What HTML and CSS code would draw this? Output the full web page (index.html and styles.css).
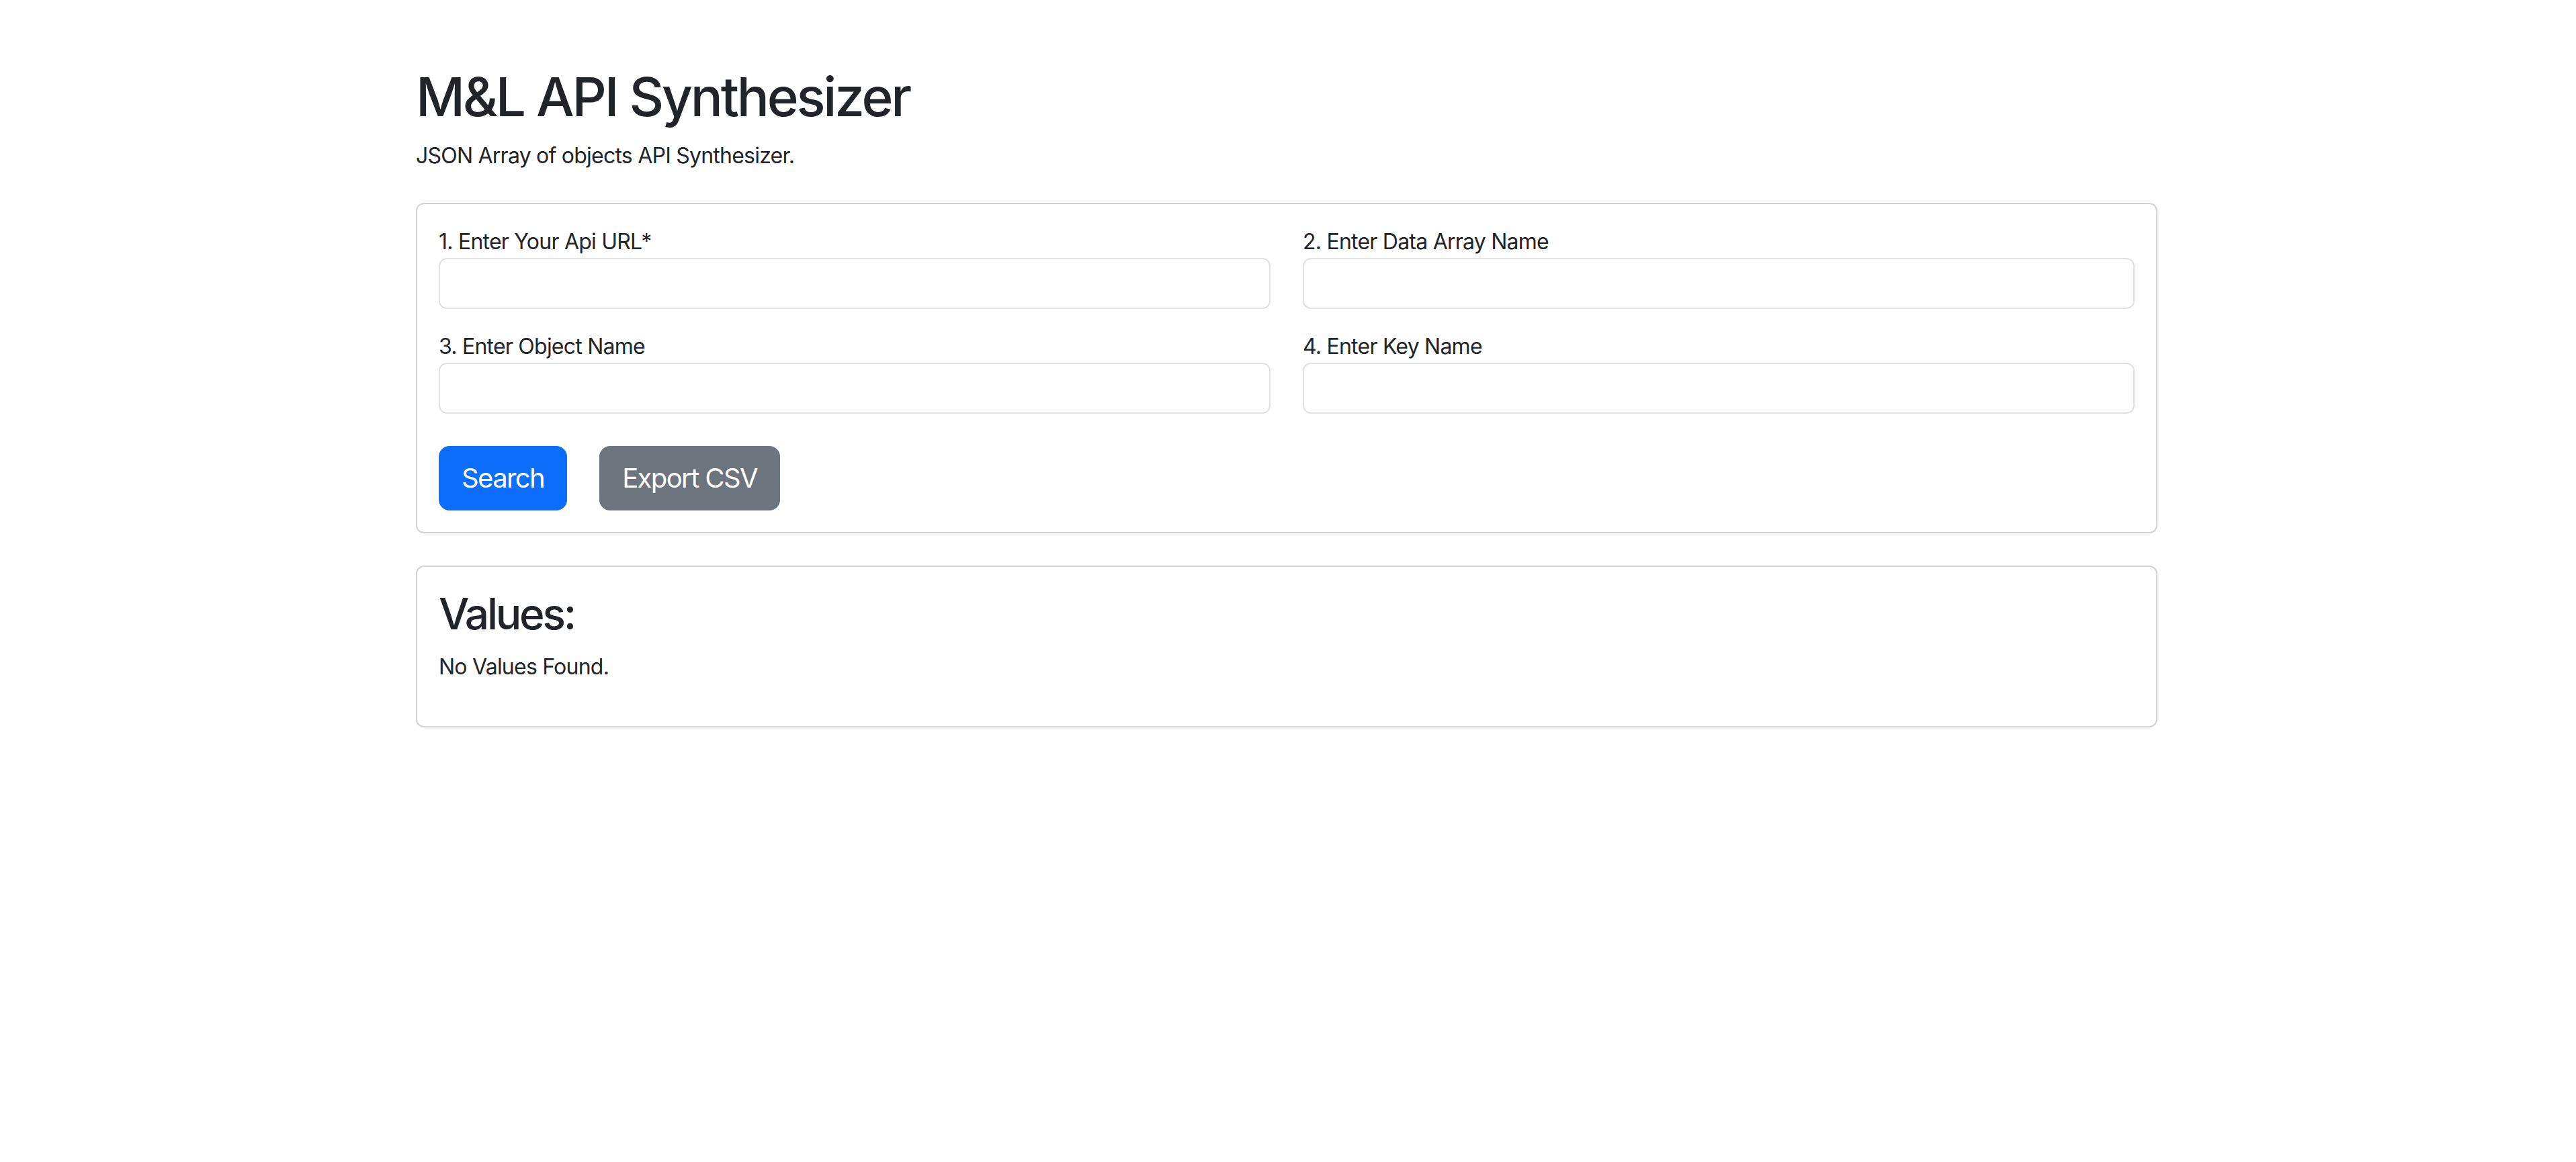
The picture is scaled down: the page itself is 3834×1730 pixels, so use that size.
FILE: index.html
```html
<!DOCTYPE html>
<html lang="en">
<head>
<meta charset="utf-8">
<title>M&amp;L API Synthesizer</title>
<link rel="stylesheet" href="styles.css">
</head>
<body>
<div class="container">
  <h1 class="title">M&amp;L API Synthesizer</h1>
  <p class="subtitle">JSON Array of objects API Synthesizer.</p>

  <div class="card form-card">
    <div class="card-body">
      <div class="row">
        <div class="col">
          <label class="label" for="api">1. Enter Your Api URL*</label>
          <input class="input" id="api" type="text">
        </div>
        <div class="col">
          <label class="label" for="arr">2. Enter Data Array Name</label>
          <input class="input" id="arr" type="text">
        </div>
        <div class="col">
          <label class="label" for="obj">3. Enter Object Name</label>
          <input class="input" id="obj" type="text">
        </div>
        <div class="col">
          <label class="label" for="key">4. Enter Key Name</label>
          <input class="input" id="key" type="text">
        </div>
      </div>
      <div class="actions">
        <button class="btn btn-primary" type="button">Search</button>
        <button class="btn btn-secondary" type="button">Export CSV</button>
      </div>
    </div>
  </div>

  <div class="card values-card">
    <div class="card-body">
      <h2 class="values-title">Values:</h2>
      <p class="values-empty">No Values Found.</p>
    </div>
  </div>
</div>
</body>
</html>
```
FILE: styles.css
```css
* { box-sizing: border-box; }

html, body {
  margin: 0;
  padding: 0;
  background: #ffffff;
}

body {
  font-family: Inter, "Noto Sans", "Liberation Sans", sans-serif;
  font-size: 32px;
  line-height: 1.5;
  letter-spacing: -0.024em;
  color: #212529;
}

.container {
  width: 100%;
  max-width: 2640px;
  margin: 0 auto;
  padding: 96px 26px 0 22px;
}

.title {
  font-size: 80px;
  font-weight: 500;
  line-height: 1.2;
  letter-spacing: -0.04em;
  margin: 0 0 16px;
}

.subtitle {
  margin: 0 0 46px;
}

.card {
  border: 2px solid rgba(0, 0, 0, 0.175);
  border-radius: 12px;
  background: #fff;
}

.values-card { margin-top: 48px; }

.card-body {
  padding: 32px;
}

.row {
  display: grid;
  grid-template-columns: 1fr 1fr;
  column-gap: 48px;
}

.col {
  display: flex;
  flex-direction: column;
  margin-bottom: 32px;
}

.label {
  display: block;
  line-height: 48px;
}

.input {
  display: block;
  width: 100%;
  height: 76px;
  padding: 12px 24px;
  font: inherit;
  color: #212529;
  background: #fff;
  border: 2px solid #dee2e6;
  border-radius: 12px;
  outline: none;
}

.actions {
  display: flex;
  gap: 48px;
  margin-top: 16px;
}

.btn {
  font-family: inherit;
  font-size: 40px;
  font-weight: 400;
  line-height: 60px;
  letter-spacing: -0.04em;
  padding: 16px 32px;
  border: 2px solid transparent;
  border-radius: 16px;
  color: #fff;
  cursor: pointer;
}

.btn-primary {
  background: #0d6efd;
  border-color: #0d6efd;
}

.btn-secondary {
  background: #6c757d;
  border-color: #6c757d;
}

.values-title {
  font-size: 64px;
  font-weight: 500;
  line-height: 1.2;
  letter-spacing: -0.05em;
  margin: 0 0 16px;
}

.values-empty {
  margin: 0 0 32px;
}
```
